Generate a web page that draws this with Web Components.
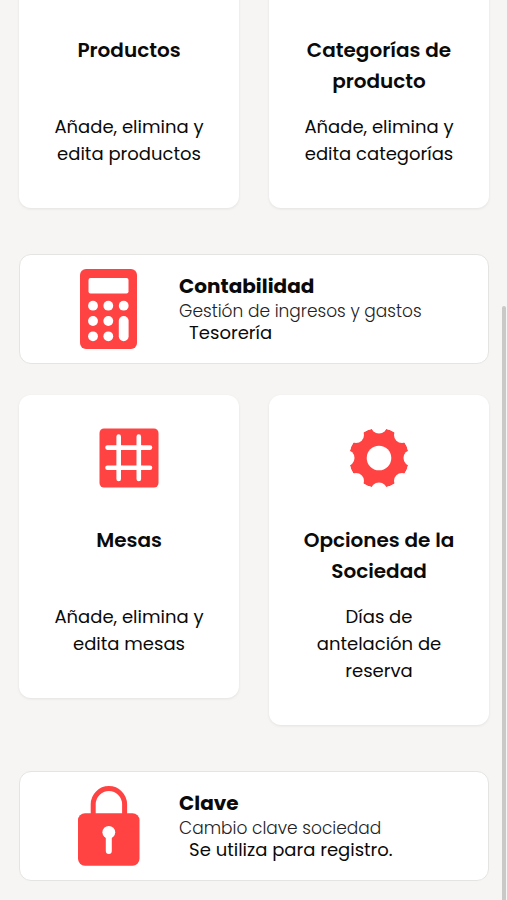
<!DOCTYPE html>
<html lang="es">
<head>
  <meta charset="utf-8">
  <meta name="viewport" content="width=device-width, initial-scale=1">
  <title>Sociedad</title>
  <style>
    body {
      margin: 0;
      background: #f6f5f3;
      color: #0a0a0a;
      font-family: Poppins, Inter, sans-serif;
    }
  </style>
</head>
<body>
  <scroll-page>
    <card-row>
      <menu-card href="#productos" heading="Productos">Añade, elimina y edita productos</menu-card>
      <menu-card href="#categorias" heading="Categorías de producto">Añade, elimina y edita categorías</menu-card>
    </card-row>
    <wide-card href="#contabilidad" heading="Contabilidad" icon="calculator">
      Gestión de ingresos y gastos
      <span slot="note">Tesorería</span>
    </wide-card>
    <card-row>
      <menu-card href="#mesas" heading="Mesas" icon="table">Añade, elimina y edita mesas</menu-card>
      <menu-card href="#opciones" heading="Opciones de la Sociedad" icon="gear">Días de antelación de reserva</menu-card>
    </card-row>
    <wide-card href="#clave" heading="Clave" icon="lock">
      Cambio clave sociedad
      <span slot="note">Se utiliza para registro.</span>
    </wide-card>
  </scroll-page>

  <script>
    const icons = {
      calculator: `
        <svg width="57" height="80" viewBox="0 0 57 80">
          <rect width="57" height="80" rx="6" fill="#ff4343"/>
          <g fill="#fff">
            <rect x="8.5" y="9" width="40" height="15.5" rx="2"/>
            <circle cx="13" cy="36.7" r="4.9"/>
            <circle cx="28.3" cy="36.7" r="4.9"/>
            <circle cx="43.7" cy="36.7" r="4.9"/>
            <circle cx="13" cy="52" r="4.9"/>
            <circle cx="28.3" cy="52" r="4.9"/>
            <circle cx="13" cy="67.3" r="4.9"/>
            <circle cx="28.3" cy="67.3" r="4.9"/>
            <rect x="38.8" y="47" width="9.8" height="25.2" rx="4.9"/>
          </g>
        </svg>`,
      table: `
        <svg width="60" height="60" viewBox="0 0 60 60">
          <rect x=".5" y=".5" width="59" height="59" rx="4.5" fill="#ff4343"/>
          <path d="M19.7 8.5V51M39.8 8.5V51M8.5 19.6H51M8.5 39.8H51" stroke="#fff" stroke-width="4.6" stroke-linecap="round"/>
        </svg>`,
      // the teeth are what is left between eight round notches
      gear: `
        <svg width="60" height="60" viewBox="-30 -30 60 60">
          <mask id="cut" maskUnits="userSpaceOnUse" x="-30" y="-30" width="60" height="60">
            <circle r="30" fill="#fff"/>
            <circle r="12.3"/>
            <circle cy="-32.5" r="8"/>
            <circle cy="32.5" r="8"/>
            <circle cx="-32.5" r="8"/>
            <circle cx="32.5" r="8"/>
            <circle cx="-23" cy="-23" r="8"/>
            <circle cx="23" cy="-23" r="8"/>
            <circle cx="-23" cy="23" r="8"/>
            <circle cx="23" cy="23" r="8"/>
          </mask>
          <circle r="30" fill="#ff4343" mask="url(#cut)"/>
        </svg>`,
      lock: `
        <svg width="62" height="80" viewBox="0 0 62 80">
          <path d="M15.2 30V18.3a15.7 15.7 0 0 1 31.4 0V30" fill="none" stroke="#ff4343" stroke-width="5"/>
          <rect y="27.3" width="61.5" height="52.5" rx="7" fill="#ff4343"/>
          <circle cx="30.8" cy="46.3" r="6.4" fill="#fff"/>
          <path d="M30.8 48V65" stroke="#fff" stroke-width="6" stroke-linecap="round"/>
        </svg>`
    };

    class CardIcon extends HTMLElement {
      constructor() {
        super();
        this.attachShadow({ mode: 'open' });
      }

      connectedCallback() {
        this.shadowRoot.innerHTML = `
          <style>
            :host { display: flex; justify-content: center; align-items: center; }
            svg { display: block; }
          </style>
          ${icons[this.getAttribute('name')] || ''}
        `;
      }
    }

    class CardRow extends HTMLElement {
      constructor() {
        super();
        this.attachShadow({ mode: 'open' });
        this.shadowRoot.innerHTML = `
          <style>
            :host {
              display: grid;
              grid-template-columns: 1fr 1fr;
              align-items: start;
              gap: 30px;
            }
          </style>
          <slot></slot>
        `;
      }
    }

    class MenuCard extends HTMLElement {
      constructor() {
        super();
        this.attachShadow({ mode: 'open' });
      }

      connectedCallback() {
        this.shadowRoot.innerHTML = `
          <style>
            :host { display: block; }
            a {
              display: block;
              padding: 33px 32px 41px;
              border-radius: 12px;
              background: #fff;
              box-shadow: 0 1px 3px rgba(0, 0, 0, 0.08);
              color: inherit;
              text-align: center;
              text-decoration: none;
            }
            card-icon { height: 60px; }
            h3 {
              min-height: 62px;
              margin: 37px 0 16px;
              font-size: 20px;
              font-weight: 600;
              line-height: 31px;
            }
            p {
              margin: 0;
              font-size: 18px;
              line-height: 27px;
            }
          </style>
          <a href="${this.getAttribute('href')}">
            <card-icon name="${this.getAttribute('icon') || ''}"></card-icon>
            <h3>${this.getAttribute('heading')}</h3>
            <p><slot></slot></p>
          </a>
        `;
      }
    }

    class WideCard extends HTMLElement {
      constructor() {
        super();
        this.attachShadow({ mode: 'open' });
      }

      connectedCallback() {
        this.shadowRoot.innerHTML = `
          <style>
            :host { display: block; }
            a {
              display: grid;
              grid-template-columns: 34% 1fr;
              align-items: center;
              padding: 14px 0;
              border: 1px solid #e4e4e3;
              border-radius: 12px;
              background: #fff;
              color: inherit;
              text-decoration: none;
            }
            card-icon { height: 80px; padding-left: 18px; }
            .text { padding-bottom: 2px; }
            h3 {
              margin: 0;
              font-size: 20px;
              font-weight: 700;
              line-height: 28px;
            }
            p {
              margin: 0;
              line-height: 22px;
            }
            .info { font-size: 17px; font-weight: 300; color: #222; }
            .note { padding-left: 10px; font-size: 18px; }
          </style>
          <a href="${this.getAttribute('href')}">
            <card-icon name="${this.getAttribute('icon')}"></card-icon>
            <div class="text">
              <h3>${this.getAttribute('heading')}</h3>
              <p class="info"><slot></slot></p>
              <p class="note"><slot name="note"></slot></p>
            </div>
          </a>
        `;
      }
    }

    class ScrollPage extends HTMLElement {
      constructor() {
        super();
        this.attachShadow({ mode: 'open' });
        this.shadowRoot.innerHTML = `
          <style>
            :host {
              display: flex;
              height: 100vh;
              overflow: hidden;
            }
            /* list is scrolled part way through its first row */
            main {
              flex: 1;
              min-width: 0;
              margin-top: -95px;
              padding: 0 13px 0 19px;
            }
            ::slotted(wide-card) { margin: 46px 0 31px; }
            .rail {
              display: flex;
              flex-direction: column;
              justify-content: flex-end;
              width: 5px;
            }
            .thumb {
              width: 4px;
              height: 66%;
              border-radius: 2px 2px 0 0;
              background: #cbc9c8;
            }
          </style>
          <main><slot></slot></main>
          <div class="rail"><div class="thumb"></div></div>
        `;
      }
    }

    customElements.define('card-icon', CardIcon);
    customElements.define('card-row', CardRow);
    customElements.define('menu-card', MenuCard);
    customElements.define('wide-card', WideCard);
    customElements.define('scroll-page', ScrollPage);
  </script>
</body>
</html>
